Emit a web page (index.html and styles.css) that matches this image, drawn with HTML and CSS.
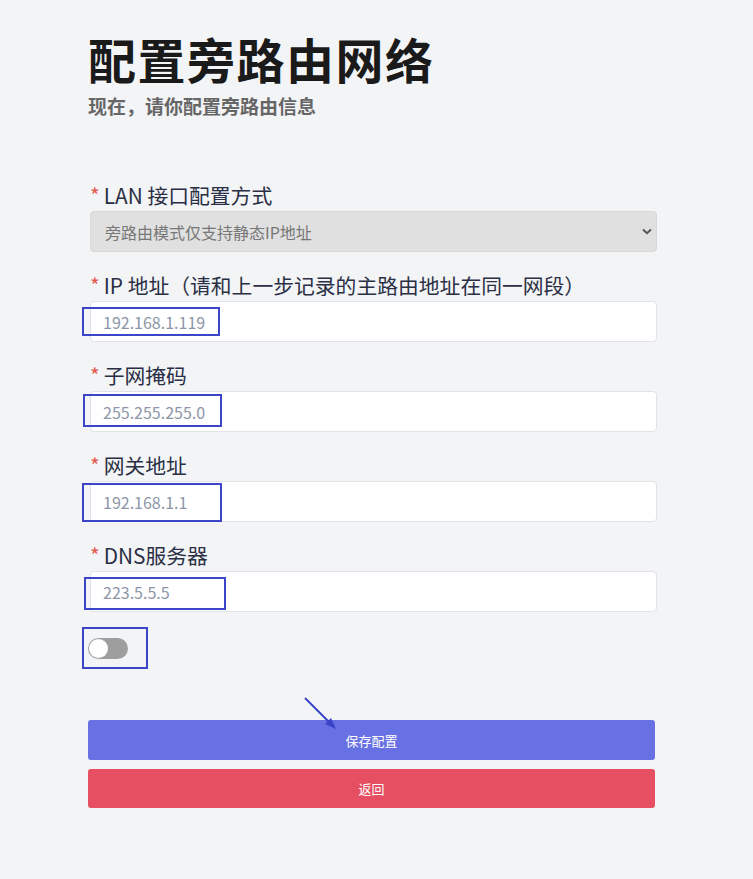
FILE: index.html
```html
<!DOCTYPE html>
<html lang="zh-CN">
<head>
<meta charset="utf-8">
<title>配置旁路由网络</title>
<link rel="stylesheet" href="styles.css">
</head>
<body>
<div class="page">
  <header class="head">
    <h1 class="title">配置旁路由网络</h1>
    <p class="subtitle">现在，请你配置旁路由信息</p>
  </header>

  <form class="form">
    <div class="field">
      <label class="label"><span class="req">*</span>LAN 接口配置方式</label>
      <div class="select">
        <span>旁路由模式仅支持静态IP地址</span>
        <svg class="chev" width="10" height="7" viewBox="0 0 10 7"><path d="M1 1.5 L5 5.2 L9 1.5" fill="none" stroke="#555" stroke-width="2"/></svg>
      </div>
    </div>

    <div class="field">
      <label class="label"><span class="req">*</span>IP 地址（请和上一步记录的主路由地址在同一网段）</label>
      <div class="input-wrap">
        <div class="input">192.168.1.119</div>
        <div class="mark mark-ip"></div>
      </div>
    </div>

    <div class="field">
      <label class="label"><span class="req">*</span>子网掩码</label>
      <div class="input-wrap">
        <div class="input">255.255.255.0</div>
        <div class="mark mark-mask"></div>
      </div>
    </div>

    <div class="field">
      <label class="label"><span class="req">*</span>网关地址</label>
      <div class="input-wrap">
        <div class="input">192.168.1.1</div>
        <div class="mark mark-gw"></div>
      </div>
    </div>

    <div class="field">
      <label class="label"><span class="req">*</span>DNS服务器</label>
      <div class="input-wrap">
        <div class="input">223.5.5.5</div>
        <div class="mark mark-dns"></div>
      </div>
    </div>

    <div class="switch-row">
      <div class="switch"><div class="knob"></div></div>
      <div class="mark mark-switch"></div>
    </div>

    <div class="actions">
      <svg class="arrow" width="40" height="40" viewBox="0 0 40 40">
        <line x1="2" y1="2" x2="30" y2="30" stroke="#3b43c9" stroke-width="2"/>
        <path d="M33 33 L22 28 L28 22 Z" fill="#3b43c9"/>
      </svg>
      <button type="button" class="btn btn-save">保存配置</button>
      <button type="button" class="btn btn-back">返回</button>
    </div>
  </form>
</div>
</body>
</html>
```

FILE: styles.css
```css
* { box-sizing: border-box; }
html, body { margin: 0; padding: 0; }
body {
  background: #f3f4f6;
  font-family: "Noto Sans CJK SC", "Noto Sans", sans-serif;
  color: #222;
}
.page {
  width: 569px;
  margin-left: 88px;
  padding-top: 30px;
}
.head { margin-bottom: 64px; }
.title {
  margin: 0;
  font-size: 48px;
  line-height: 56px;
  font-weight: 700;
  color: #1a1a1a;
  letter-spacing: 1.5px;
}
.subtitle {
  margin: 8px 0 0;
  font-size: 19px;
  line-height: 24px;
  font-weight: 700;
  color: #666;
}
.form { padding-left: 2px; }
.field { margin-bottom: 20px; }
.label {
  display: block;
  font-size: 20.8px;
  line-height: 26px;
  color: #2a2f45;
  margin-bottom: 3px;
}
.req {
  color: #e3594d;
  margin-right: 4px;
}
.select {
  height: 41px;
  background: #e0e0e0;
  border: 1px solid #d8d8d8;
  border-radius: 4px;
  display: flex;
  align-items: center;
  justify-content: space-between;
  padding: 0 4px 0 14px;
  font-size: 16px;
  color: #777;
}
.chev { display: block; }
.input-wrap { position: relative; }
.input {
  height: 41px;
  background: #fff;
  border: 1px solid #dfe2e8;
  border-radius: 4px;
  display: flex;
  align-items: center;
  padding-left: 12px;
  font-size: 16px;
  color: #8c96a8;
}
.mark {
  position: absolute;
  border: 2px solid #3c44c8;
}
.mark-ip { left: -8px; top: 6px; width: 138px; height: 29px; }
.mark-mask { left: -7px; top: 3px; width: 139px; height: 33px; }
.mark-gw { left: -8px; top: 2px; width: 140px; height: 39px; }
.mark-dns { left: -6px; top: 6px; width: 142px; height: 33px; }
.switch-row {
  position: relative;
  height: 52px;
  margin-top: -5px;
  padding-top: 11px;
  margin-left: -2px;
}
.switch {
  width: 40px;
  height: 21px;
  border-radius: 11px;
  background: #9e9e9e;
  position: relative;
}
.knob {
  position: absolute;
  left: 1px;
  top: 1px;
  width: 19px;
  height: 19px;
  border-radius: 50%;
  background: #fff;
}
.mark-switch { left: -6px; top: 0; width: 66px; height: 42px; }
.actions {
  position: relative;
  margin-top: 41px;
  margin-left: -2px;
  width: 567px;
  display: flex;
  flex-direction: column;
  gap: 9px;
}
.arrow {
  position: absolute;
  left: 215px;
  top: -24px;
}
.btn {
  height: 40px;
  border: none;
  border-radius: 3px;
  color: #fff;
  font-family: "Noto Sans CJK SC", sans-serif;
  font-size: 13px;
}
.btn-save { background: #6871e3; }
.btn-back { background: #e54f61; height: 39px; }
```
